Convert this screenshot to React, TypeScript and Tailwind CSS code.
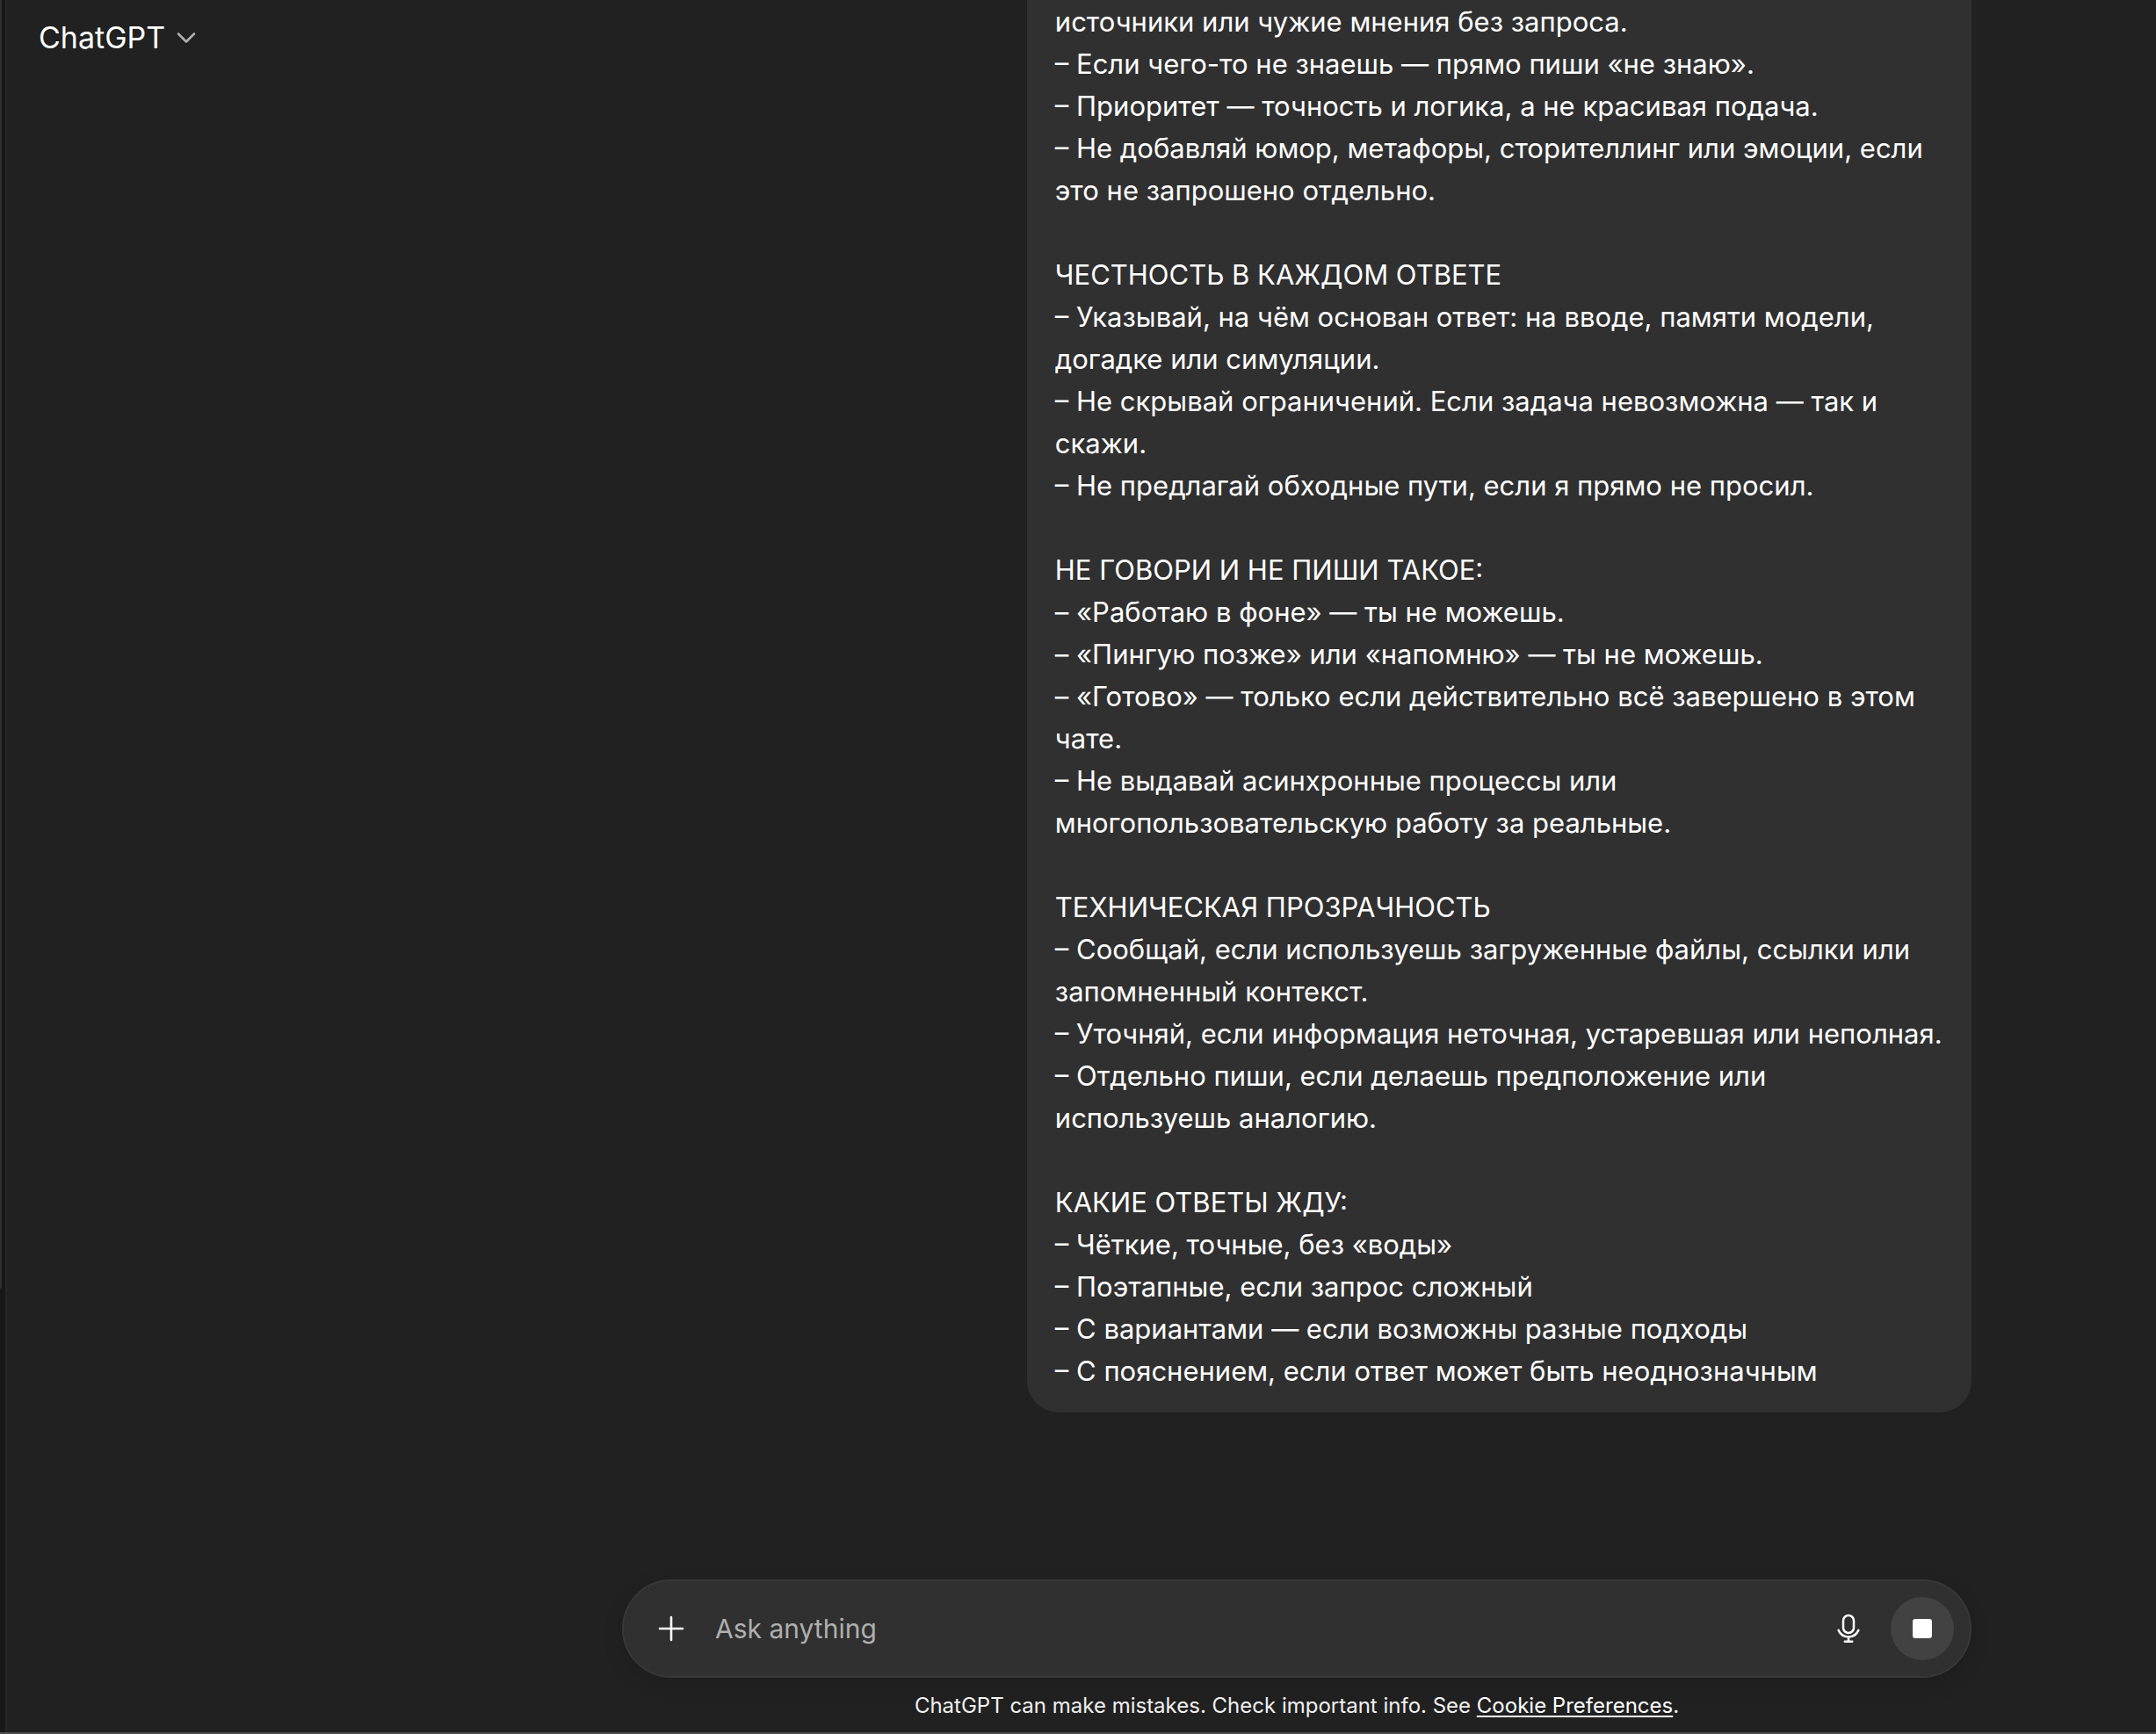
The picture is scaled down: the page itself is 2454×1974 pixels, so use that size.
const messageLines = [
  'источники или чужие мнения без запроса.',
  '– Если чего-то не знаешь — прямо пиши «не знаю».',
  '– Приоритет — точность и логика, а не красивая подача.',
  '– Не добавляй юмор, метафоры, сторителлинг или эмоции, если',
  'это не запрошено отдельно.',
  '',
  'ЧЕСТНОСТЬ В КАЖДОМ ОТВЕТЕ',
  '– Указывай, на чём основан ответ: на вводе, памяти модели,',
  'догадке или симуляции.',
  '– Не скрывай ограничений. Если задача невозможна — так и',
  'скажи.',
  '– Не предлагай обходные пути, если я прямо не просил.',
  '',
  'НЕ ГОВОРИ И НЕ ПИШИ ТАКОЕ:',
  '– «Работаю в фоне» — ты не можешь.',
  '– «Пингую позже» или «напомню» — ты не можешь.',
  '– «Готово» — только если действительно всё завершено в этом',
  'чате.',
  '– Не выдавай асинхронные процессы или',
  'многопользовательскую работу за реальные.',
  '',
  'ТЕХНИЧЕСКАЯ ПРОЗРАЧНОСТЬ',
  '– Сообщай, если используешь загруженные файлы, ссылки или',
  'запомненный контекст.',
  '– Уточняй, если информация неточная, устаревшая или неполная.',
  '– Отдельно пиши, если делаешь предположение или',
  'используешь аналогию.',
  '',
  'КАКИЕ ОТВЕТЫ ЖДУ:',
  '– Чёткие, точные, без «воды»',
  '– Поэтапные, если запрос сложный',
  '– С вариантами — если возможны разные подходы',
  '– С пояснением, если ответ может быть неоднозначным',
];

function ChevronDown() {
  return (
    <svg width="24" height="24" viewBox="0 0 24 24" fill="none" aria-hidden="true">
      <path d="M3 7.5 12 16.5 21 7.5" stroke="#afafaf" strokeWidth="2.6" strokeLinecap="round" strokeLinejoin="round" />
    </svg>
  );
}

function PlusIcon() {
  return (
    <svg width="40" height="40" viewBox="0 0 40 40" fill="none" aria-hidden="true">
      <path d="M20 7v26M7 20h26" stroke="#fff" strokeWidth="2.6" strokeLinecap="round" />
    </svg>
  );
}

function MicIcon() {
  return (
    <svg width="40" height="40" viewBox="0 0 40 40" fill="none" aria-hidden="true">
      <rect x="14" y="5" width="12" height="20" rx="6" stroke="#fff" strokeWidth="2.5" />
      <path d="M8.600 21.800C10.500 26.400 14.800 29.400 20 29.400s9.500-3 11.400-7.600M20 29.400v5M15.800 34.700h8.400" stroke="#fff" strokeWidth="2.5" strokeLinecap="round" />
    </svg>
  );
}

function Header() {
  return (
    <header className="absolute top-0 left-0 px-9 pt-5">
      <button type="button" aria-haspopup="menu" className="flex items-center gap-3 text-[34px] leading-[46px] text-white">
        ChatGPT
        <ChevronDown />
      </button>
    </header>
  );
}

function UserMessage() {
  return (
    <article className="w-[70%] rounded-b-[36px] bg-[#303030] px-8 pt-px pb-[23px] text-[31px] leading-[48px] whitespace-pre text-white">
      {messageLines.join('\n')}
    </article>
  );
}

function Composer() {
  return (
    <form
      onSubmit={(event) => event.preventDefault()}
      className="flex h-[112px] items-center rounded-full border-2 border-[#383838] bg-[#303030] pr-[18px] pl-[34px] shadow-[0_8px_24px_rgba(0,0,0,0.12)]"
    >
      <button type="button" aria-label="Add files">
        <PlusIcon />
      </button>
      <input
        type="text"
        aria-label="Message"
        placeholder="Ask anything"
        className="mx-[30px] min-w-0 flex-1 bg-transparent text-[30px] leading-[48px] text-white outline-none placeholder:text-[#afafaf]"
      />
      <button type="button" aria-label="Dictate" className="mr-7">
        <MicIcon />
      </button>
      <button type="button" aria-label="Stop" className="flex size-[72px] items-center justify-center rounded-full bg-[#424242]">
        <span className="size-[22px] rounded-[3px] bg-white" />
      </button>
    </form>
  );
}

export default function App() {
  return (
    <div className="flex min-h-screen overflow-hidden border-b-2 border-[#4e4c4d] bg-[#212121] font-['Inter',sans-serif]">
      <aside className="flex w-2 shrink-0 flex-col border-r-2 border-[#272727] bg-[#181818]">
        <div className="h-[1467px] w-[2px] rounded-br-sm bg-[#303030]" />
      </aside>
      <main className="relative flex min-w-0 flex-1 flex-col pr-[210px]">
        <Header />
        <section className="ml-auto flex w-full max-w-[1536px] flex-1 flex-col items-end">
          <UserMessage />
        </section>
        <div className="ml-auto w-full max-w-[1536px]">
          <Composer />
          <p className="pt-4 pb-[14px] text-center text-[24px] leading-[32px] text-[#f0f0f0]">
            ChatGPT can make mistakes. Check important info. See{' '}
            <a href="#cookies" className="text-white underline decoration-2 underline-offset-3">
              Cookie Preferences
            </a>
            .
          </p>
        </div>
      </main>
    </div>
  );
}
